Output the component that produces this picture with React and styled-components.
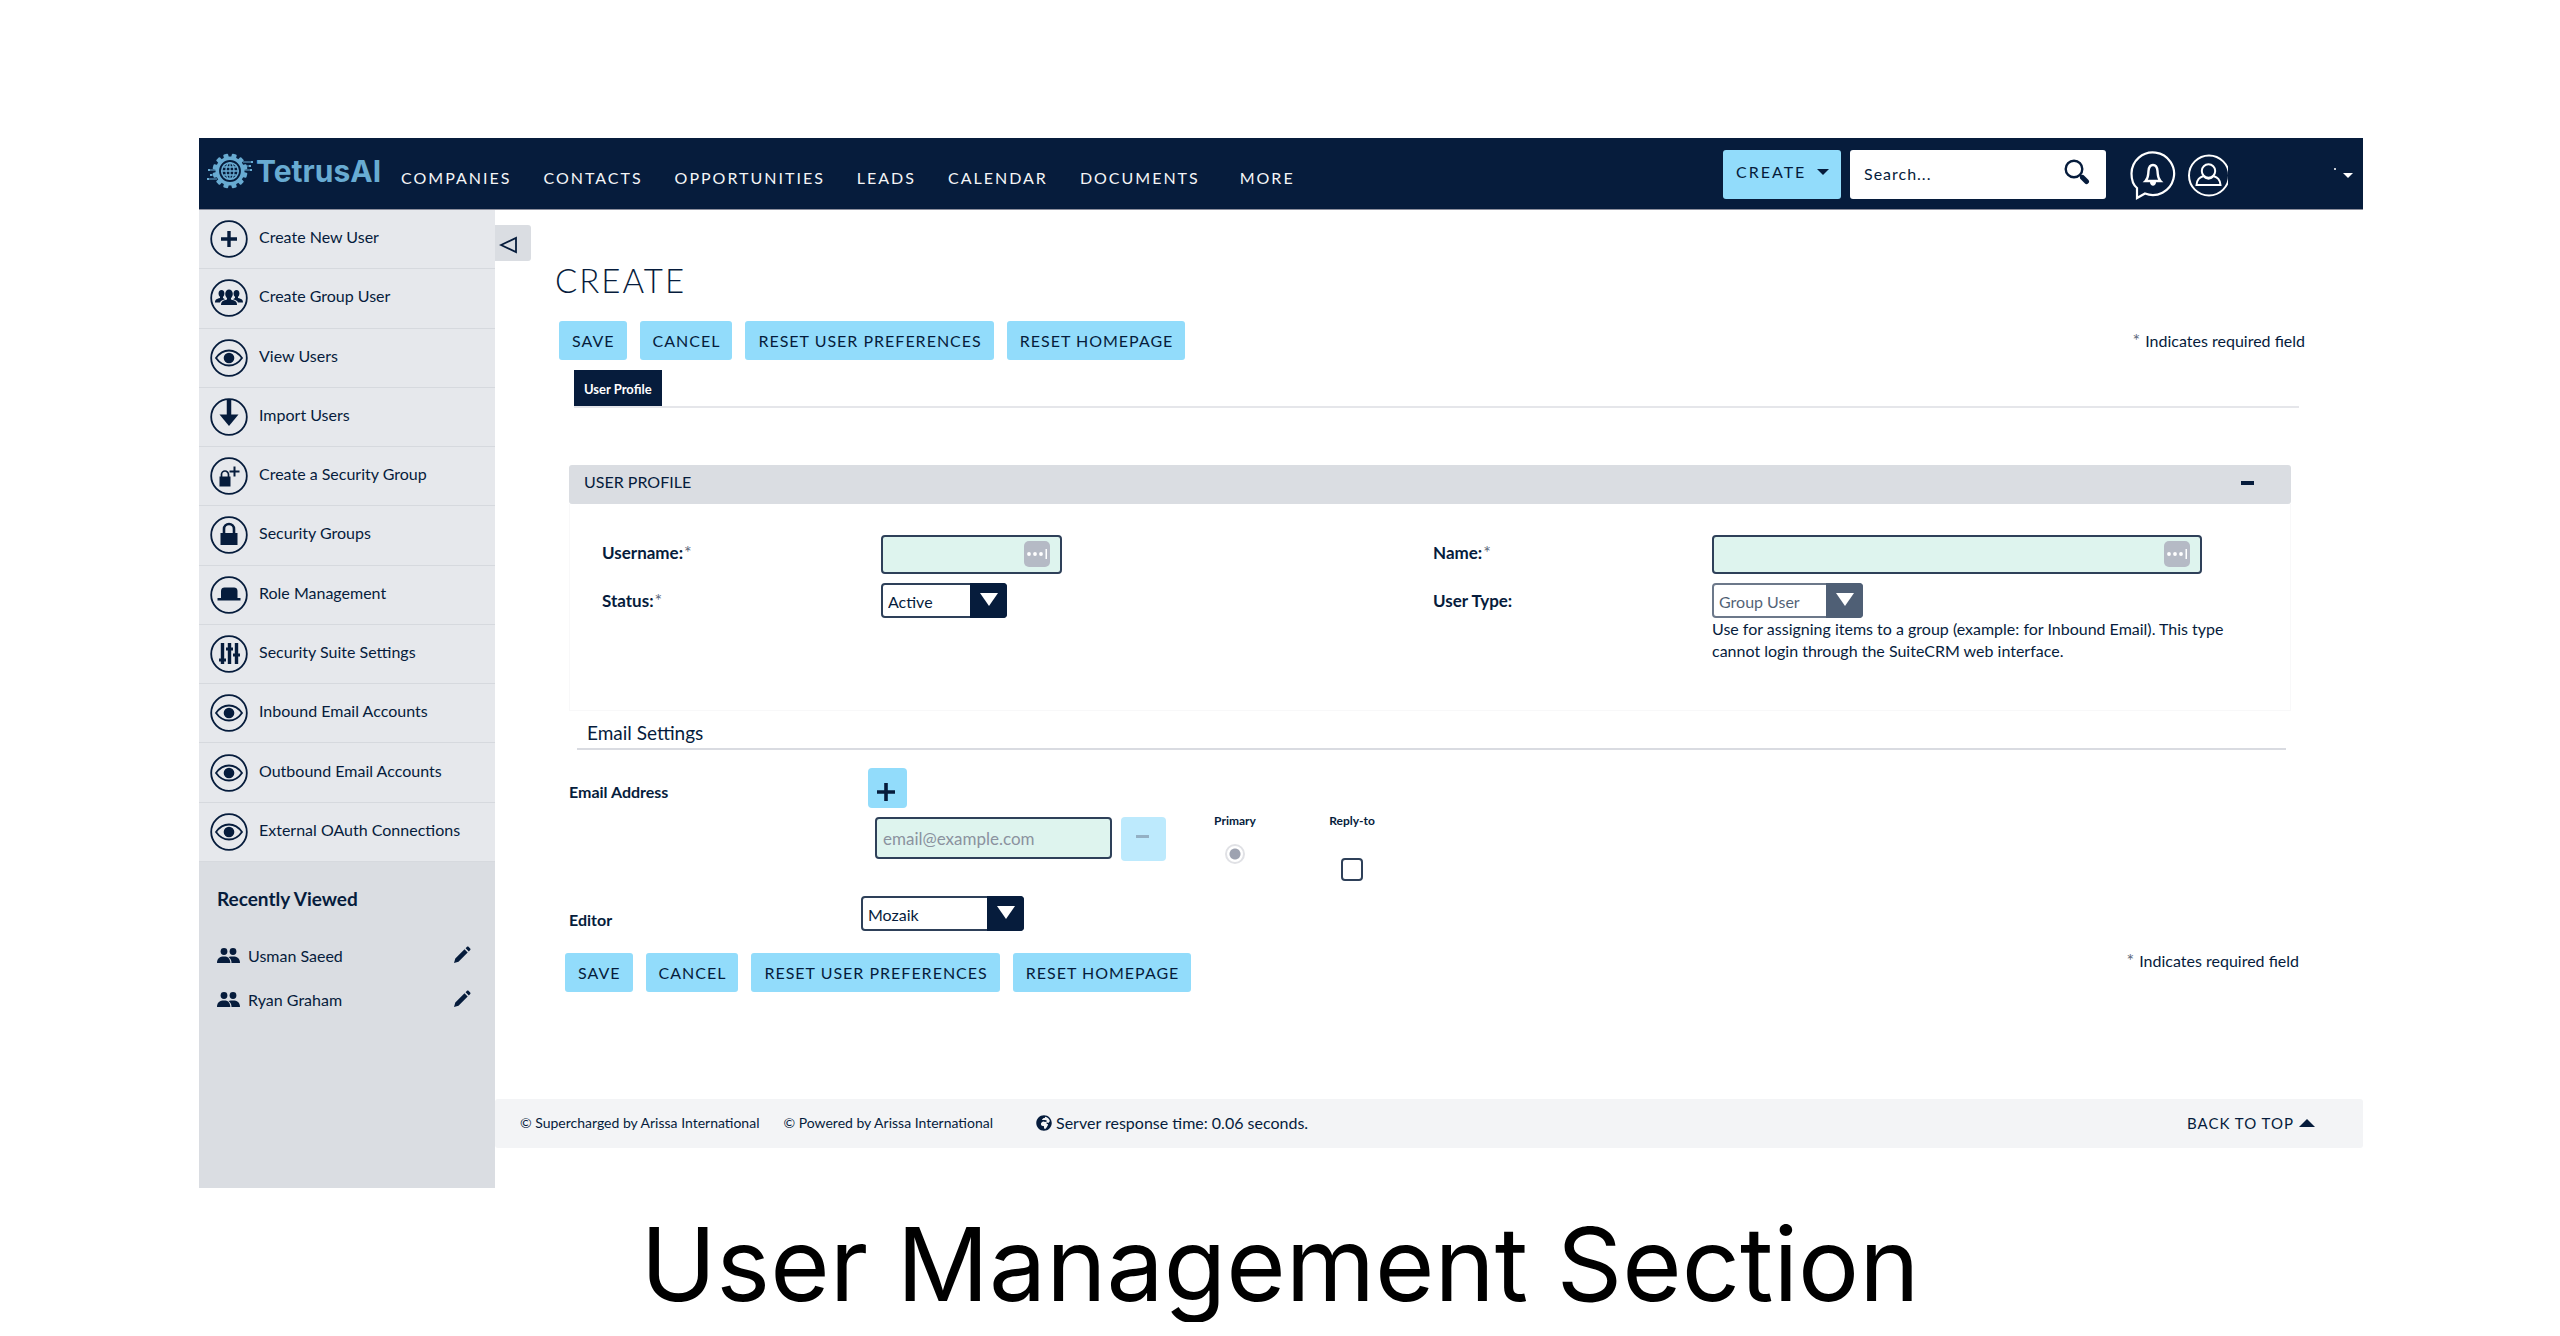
import React, { useState } from "react";
import styled, { createGlobalStyle } from "styled-components";
import { FaGlobeAfrica } from "react-icons/fa";

const GlobalStyle = createGlobalStyle`
  * {
    box-sizing: border-box;
  }
  body {
    margin: 0;
    background: #fff;
    color: #061c3c;
    font-family: Lato, "Liberation Sans", sans-serif;
    font-size: 16px;
  }
  button, input, select {
    font-family: inherit;
    margin: 0;
  }
`;

const Page = styled.div`
  padding: 138px 197px 0 199px;
`;

const Header = styled.header`
  display: flex;
  align-items: flex-start;
  height: 72px;
  padding-left: 8px;
  padding-right: 10px;
  background: #061c3c;
  border-bottom: 1px solid #8d8f9d;
`;

const Logo = styled.a`
  display: flex;
  align-items: center;
  gap: 3px;
  margin-top: 15px;
  color: #68abd2;
  font-family: Inter, "Liberation Sans", sans-serif;
  font-size: 30px;
  line-height: 36px;
  font-weight: 700;
  text-decoration: none;
`;

const Nav = styled.nav`
  display: flex;
  flex: 1;
  gap: 32px;
  margin-top: 30px;
  margin-left: 20px;
`;

const NavLink = styled.a`
  color: #f4f5f7;
  font-size: 16px;
  line-height: 20px;
  letter-spacing: 2px;
  text-decoration: none;

  &:last-child {
    margin-left: 8px;
  }
`;

const CreateButton = styled.button`
  display: flex;
  align-items: center;
  justify-content: space-between;
  width: 118px;
  height: 49px;
  margin-top: 12px;
  padding: 0 12px 6px 13px;
  border: 0;
  border-radius: 3px;
  background: #92dcfb;
  color: #061c3c;
  font-size: 16px;
  letter-spacing: 2px;
`;

const Caret = styled.span`
  border: ${(props) => props.$size}px solid transparent;
  border-bottom: 0;
  border-top-color: currentColor;
`;

const Search = styled.form`
  display: flex;
  align-items: center;
  width: 256px;
  height: 49px;
  margin: 12px 0 0 9px;
  padding: 0 16px 6px 14px;
  border-radius: 3px;
  background: #fff;
`;

const SearchInput = styled.input`
  flex: 1;
  min-width: 0;
  padding: 4px 0 0;
  border: 0;
  outline: 0;
  background: transparent;
  color: #061c3c;
  font-size: 16px;
  letter-spacing: 1px;

  &::placeholder {
    color: #061c3c;
    opacity: 1;
  }
`;

const IconButton = styled.button`
  display: flex;
  padding: 0;
  border: 0;
  background: none;
  color: inherit;
`;

const HeaderIcons = styled.div`
  display: flex;
  gap: 12px;
  margin: 12px 0 0 24px;
`;

const AccountMenu = styled.button`
  display: flex;
  align-items: flex-start;
  gap: 7px;
  margin: 30px 0 0 106px;
  padding: 0;
  border: 0;
  background: none;
  color: #fff;

  i {
    width: 2px;
    height: 2px;
    background: #c5cad3;
  }
  span {
    margin-top: 5px;
  }
`;

const Body = styled.div`
  display: flex;
  align-items: stretch;
`;

const Sidebar = styled.aside`
  width: 296px;
  flex-shrink: 0;
  background: #dadde2;
`;

const Actions = styled.ul`
  display: grid;
  grid-auto-rows: 1fr;
  min-height: 652px;
  margin: 0;
  padding: 0;
  list-style: none;
  background: #e6e8ec;
`;

const ActionItem = styled.li`
  border-bottom: 1px solid #d6d9de;

  a {
    display: flex;
    align-items: center;
    gap: 11px;
    height: 100%;
    padding-left: 11px;
    color: #061c3c;
    line-height: 20px;
    text-decoration: none;
  }
  span {
    padding-bottom: 4px;
  }
`;

const Recent = styled.section`
  padding: 26px 24px 0 18px;
`;

const RecentTitle = styled.h2`
  margin: 0 0 35px;
  font-size: 19px;
  line-height: 22px;
  font-weight: 700;
`;

const RecentItem = styled.div`
  display: flex;
  align-items: center;
  height: 20px;
  margin-bottom: 24px;

  a {
    flex: 1;
    margin-left: 8px;
    color: #061c3c;
    text-decoration: none;
  }
`;

const Main = styled.main`
  flex: 1;
  min-width: 0;
`;

const Toggle = styled.button`
  display: flex;
  align-items: center;
  width: 36px;
  height: 36px;
  margin-top: 15px;
  padding: 4px 0 0 4px;
  border: 0;
  border-radius: 0 3px 3px 0;
  background: #dadde2;
`;

const Content = styled.form`
  padding: 0 72px 107px 74px;
`;

const Title = styled.h1`
  margin: 0 -14px 22px;
  font-size: 33px;
  line-height: 38px;
  font-weight: 300;
  letter-spacing: 2px;
`;

const ButtonBar = styled.div`
  display: flex;
  align-items: ${(props) => (props.$bottom ? "flex-start" : "center")};
  gap: 13px;
  margin: ${(props) => (props.$bottom ? "22px -8px 0 -4px" : "0 -14px 10px -10px")};
`;

const Button = styled.button`
  height: 39px;
  padding: 0 12px 0 13px;
  border: 0;
  border-radius: 3px;
  background: #92dcfb;
  color: #061c3c;
  font-size: 16px;
  letter-spacing: 1px;
`;

const Required = styled.p`
  margin: 0 0 0 auto;
  line-height: 14px;
`;

const Star = styled.span`
  margin: 0 ${(props) => (props.$note ? 5 : 2)}px 0 1px;
  color: #60697c;
  font-size: 18px;
  line-height: 14px;
  font-weight: 400;
`;

const Tabs = styled.div`
  display: flex;
  margin: 0 -8px 57px 5px;
  border-bottom: 2px solid #e5e6ea;
`;

const Tab = styled.button`
  height: 36px;
  padding: 2px 10px 0;
  border: 0;
  background: #061c3c;
  color: #fff;
  font-size: 13px;
  font-weight: 700;
`;

const PanelHead = styled.div`
  display: flex;
  align-items: center;
  justify-content: space-between;
  height: 39px;
  padding: 0 37px 3px 15px;
  border-radius: 3px;
  background: #dadde2;

  h2 {
    margin: 0;
    padding-bottom: 3px;
    font-size: 16px;
    line-height: 20px;
    font-weight: 400;
  }
`;

const Minus = styled.span`
  width: 13px;
  height: ${(props) => (props.$muted ? 3 : 4)}px;
  background: ${(props) => (props.$muted ? "#93b0c4" : "#061c3c")};
`;

const PanelBody = styled.div`
  display: grid;
  grid-template-columns: 279px 1fr 279px 1fr;
  row-gap: 9px;
  min-height: 207px;
  padding: 31px 26px 40px 32px;
  border: 1px solid #f8f8f9;
  border-top: 0;
  align-content: start;
`;

const Label = styled.label`
  padding-top: ${(props) => props.$top}px;
  font-size: ${(props) => (props.$large ? 17 : 16)}px;
  line-height: 20px;
  font-weight: 700;
`;

const TextBox = styled.div`
  position: relative;
  width: ${(props) => props.$width}px;
  max-width: 100%;
  height: ${(props) => props.$height}px;

  input {
    width: 100%;
    height: 100%;
    padding: 0 6px;
    border: 2px solid #2e4059;
    border-radius: 4px;
    outline: 0;
    background: #def4ee;
    color: #061c3c;
    font-size: 17px;
  }
  input::placeholder {
    color: #8b929f;
    opacity: 1;
  }
  svg {
    position: absolute;
    top: 6px;
    right: 12px;
  }
`;

const SelectBox = styled.div`
  position: relative;
  width: ${(props) => props.$width}px;
  height: 35px;
  opacity: ${(props) => (props.$muted ? 0.7 : 1)};

  select {
    appearance: none;
    width: 100%;
    height: 100%;
    padding: 2px 40px 0 5px;
    border: 2px solid #2e4059;
    border-radius: 4px;
    background: #fff;
    color: #061c3c;
    font-size: 16px;
    opacity: 1;
  }
`;

const SelectArrow = styled.span`
  position: absolute;
  top: 0;
  right: 0;
  display: flex;
  align-items: center;
  justify-content: center;
  width: 37px;
  height: 100%;
  padding-bottom: 2px;
  border-radius: 0 4px 4px 0;
  background: #061c3c;
  color: #fff;
  pointer-events: none;

  i {
    border: 9px solid transparent;
    border-top: 13px solid currentColor;
    border-bottom: 0;
  }
`;

const Help = styled.p`
  max-width: 520px;
  margin: 0;
  font-size: 16px;
  line-height: 22px;
`;

const SectionTitle = styled.h2`
  margin: 0 5px 18px 8px;
  padding: 8px 0 1px 10px;
  border-bottom: 2px solid #d9dbe1;
  font-size: 19px;
  line-height: 28px;
  font-weight: 400;
`;

const SettingRow = styled.div`
  display: grid;
  grid-template-columns: 292px 1fr;
  margin-bottom: 14px;
`;

const AddButton = styled.button`
  display: flex;
  justify-content: center;
  width: 39px;
  height: 40px;
  margin: 0 0 9px 7px;
  padding: 15px 3px 0 0;
  border: 0;
  border-radius: 4px;
  background: #92dcfb;
`;

const EmailRow = styled.div`
  display: flex;
  align-items: flex-start;
  padding-left: 14px;
`;

const RemoveButton = styled.button`
  display: flex;
  align-items: center;
  justify-content: center;
  width: 45px;
  height: 44px;
  margin: 0 34px 0 9px;
  padding: 0 2px 5px 0;
  border: 0;
  border-radius: 4px;
  background: #bdeafd;
`;

const Option = styled.label`
  display: flex;
  flex-direction: column;
  align-items: center;
  width: 70px;
  height: 65px;
  margin-right: 47px;
  font-size: 12px;
  line-height: 8px;
  font-weight: 700;

  input {
    appearance: none;
    margin-top: ${(props) => (props.$check ? 33 : 19)}px;
  }
  input[type="checkbox"] {
    width: 22px;
    height: 23px;
    border: 2px solid #2e4059;
    border-radius: 4px;
  }
  input[type="radio"] {
    width: 20px;
    height: 20px;
    border: 2px solid #e0e1e5;
    border-radius: 50%;
    background: radial-gradient(circle, #9da2b0 0 5px, #fff 6px);
  }
`;

const Footer = styled.footer`
  display: flex;
  align-items: center;
  height: 49px;
  margin-bottom: 40px;
  padding: 0 48px 2px 25px;
  border-radius: 3px;
  background: #f3f4f6;
  font-size: 16px;

  svg {
    margin: 0 4px 0 19px;
  }
`;

const Copyright = styled.span`
  margin-right: 24px;
  font-size: 14px;
`;

const BackToTop = styled.a`
  display: flex;
  align-items: center;
  gap: 5px;
  margin-left: auto;
  color: #061c3c;
  font-size: 15px;
  letter-spacing: 1px;
  text-decoration: none;

  i {
    border: 8px solid transparent;
    border-top: 0;
    border-bottom-color: currentColor;
  }
`;

const Caption = styled.h2`
  margin: 18px 0 0;
  color: #000;
  font-family: Inter, "Open Sans", sans-serif;
  font-size: 102px;
  line-height: 116px;
  font-weight: 400;
  text-align: center;
`;

function GearLogo() {
  const teeth = Array.from({ length: 12 }, (_, i) => i * 30 + 15);
  return (
    <svg width="46" height="36" viewBox="0 0 46 36" fill="none" stroke="currentColor">
      {teeth.map((deg) => (
        <rect key={deg} x="20.5" y="0.5" width="5" height="6" rx="1" fill="currentColor" stroke="none" transform={`rotate(${deg} 23 18)`} />
      ))}
      <circle cx="23" cy="18" r="12.7" strokeWidth="3.6" />
      <circle cx="23" cy="18" r="8.3" strokeWidth="1.6" />
      <ellipse cx="23" cy="18" rx="4" ry="8.3" strokeWidth="1.3" />
      <path d="M23 10v16M15 18h16M16.500 14h13M16.500 22h13" strokeWidth="1.3" />
      <path d="M2 17h7M5 22h6M1 26h9M36 9h9M37 13h6M37 17h8" strokeWidth="1" />
      <path d="M1 17h2M3 22h2M0 26h2M44 9h2M42 13h2M43 17h2" strokeWidth="2" />
    </svg>
  );
}

const glyphs = {
  plus: <path d="M19 11v16M11 19h16" strokeWidth="3.4" />,
  group: (
    <g fill="currentColor" stroke="none">
      <ellipse cx="19" cy="15" rx="3.8" ry="4.6" />
      <path d="M17 18h4v2.500c4 1 6 2 6 5.500H11c0-3.500 2-4.500 6-5.500z" />
      <ellipse cx="11.500" cy="14.500" rx="2.900" ry="3.500" />
      <path d="M10 17h3v2l2 1.200c-3.500 1.300-4.500 1.800-5 3.300H5c0-3 1.500-3.500 5-4.500z" />
      <ellipse cx="26.500" cy="14.500" rx="2.900" ry="3.500" />
      <path d="M28 17h-3v2l-2 1.200c3.500 1.300 4.500 1.800 5 3.300h5c0-3-1.500-3.500-5-4.500z" />
    </g>
  ),
  eye: (
    <>
      <path d="M6 19c7-10 19-10 26 0-7 10-19 10-26 0z" strokeWidth="1.800" />
      <circle cx="19" cy="19" r="5.300" fill="currentColor" stroke="none" />
    </>
  ),
  down: (
    <>
      <path d="M19 1v18" strokeWidth="4.500" />
      <path d="M9.500 16.500h19L19 28z" fill="currentColor" stroke="none" />
    </>
  ),
  lockPlus: (
    <>
      <rect x="9.500" y="19.500" width="11" height="10" fill="currentColor" stroke="none" />
      <path d="M11.500 20v-2.500a3.500 3.500 0 0 1 7 0V20" strokeWidth="1.700" />
      <path d="M24.500 9.500v10M19.500 14.500h10" strokeWidth="2" />
    </>
  ),
  lock: (
    <>
      <rect x="10.500" y="17" width="17" height="12" fill="currentColor" stroke="none" />
      <path d="M14 18v-5a5 5 0 0 1 10 0v5" strokeWidth="2.600" />
    </>
  ),
  hat: <path d="M11 22v-7c0-2.500 1.500-3.500 3.500-3.500h9.500c2 0 3.500 1 3.500 3.500v7h3v2.500h-23V22z" fill="currentColor" stroke="none" />,
  sliders: (
    <>
      <path d="M12.500 8v21M19.500 8v21M26.500 8v21" strokeWidth="3.400" />
      <path d="M9 25h7M16 14h7M23 20h7" strokeWidth="3" />
    </>
  ),
};

function ActionIcon({ name }) {
  return (
    <svg width="38" height="38" viewBox="0 0 38 38" fill="none" stroke="currentColor">
      <circle cx="19" cy="19" r="17.800" strokeWidth="1.800" />
      {glyphs[name]}
    </svg>
  );
}

function PeopleIcon() {
  return (
    <svg width="23" height="20" viewBox="0 0 23 20" fill="#061c3c">
      <circle cx="7" cy="6.500" r="3.400" />
      <circle cx="16" cy="6.500" r="3.400" />
      <path d="M0 18c0-5 3-6.500 7-6.500s6 1.800 6.300 6.500z" />
      <path d="M11.500 12c1.400-.4 3-.5 4.500-.5 4 0 7 1.500 7 6.500h-8.500c0-2.800-1-4.600-3-6z" />
    </svg>
  );
}

function PencilIcon() {
  return (
    <svg width="18" height="18" viewBox="0 0 18 18" fill="#061c3c">
      <path d="M1 17l1.300-4.500 9.200-9.200 3.200 3.200-9.200 9.200zM12.600 2.200L14 .800c.500-.500 1-.500 1.500 0l1.700 1.700c.500.500.500 1 0 1.500l-1.400 1.400z" />
    </svg>
  );
}

function FillIcon() {
  return (
    <svg width="26" height="26" viewBox="0 0 26 26">
      <rect width="26" height="26" rx="5" fill="#b5bac5" />
      <g fill="#fff">
        <circle cx="5" cy="13" r="1.900" />
        <circle cx="11" cy="13" r="1.900" />
        <circle cx="17" cy="13" r="1.900" />
        <rect x="21.500" y="8" width="1.500" height="10" />
      </g>
    </svg>
  );
}

function Select({ id, width, muted, options }) {
  return (
    <SelectBox $width={width} $muted={muted}>
      <select id={id} disabled={muted}>
        {options.map((o) => (
          <option key={o}>{o}</option>
        ))}
      </select>
      <SelectArrow>
        <i />
      </SelectArrow>
    </SelectBox>
  );
}

function FormButtons({ bottom }) {
  return (
    <ButtonBar $bottom={bottom}>
      <Button type="button">SAVE</Button>
      <Button type="button">CANCEL</Button>
      <Button type="button">RESET USER PREFERENCES</Button>
      <Button type="button">RESET HOMEPAGE</Button>
      <Required>
        <Star $note>*</Star>
        Indicates required field
      </Required>
    </ButtonBar>
  );
}

const navItems = ["COMPANIES", "CONTACTS", "OPPORTUNITIES", "LEADS", "CALENDAR", "DOCUMENTS", "MORE"];

const actions = [
  ["plus", "Create New User"],
  ["group", "Create Group User"],
  ["eye", "View Users"],
  ["down", "Import Users"],
  ["lockPlus", "Create a Security Group"],
  ["lock", "Security Groups"],
  ["hat", "Role Management"],
  ["sliders", "Security Suite Settings"],
  ["eye", "Inbound Email Accounts"],
  ["eye", "Outbound Email Accounts"],
  ["eye", "External OAuth Connections"],
];

const recent = ["Usman Saeed", "Ryan Graham"];

export default function App() {
  const [replyTo, setReplyTo] = useState(false);

  return (
    <>
      <GlobalStyle />
      <Page>
        <Header>
          <Logo href="#">
            <GearLogo />
            TetrusAI
          </Logo>
          <Nav>
            {navItems.map((item) => (
              <NavLink key={item} href="#">
                {item}
              </NavLink>
            ))}
          </Nav>
          <CreateButton type="button">
            CREATE
            <Caret $size={6} />
          </CreateButton>
          <Search>
            <SearchInput placeholder="Search..." aria-label="Search" />
            <IconButton type="button" aria-label="Search">
              <svg width="26" height="26" viewBox="0 0 26 26" fill="none" stroke="currentColor">
                <circle cx="10" cy="10" r="8.300" strokeWidth="2.400" />
                <path d="M18.500 18.500l4 4" strokeWidth="5" strokeLinecap="round" />
                <path d="M15.500 15.500l3 3" strokeWidth="2" />
              </svg>
            </IconButton>
          </Search>
          <HeaderIcons>
            <IconButton type="button" aria-label="Notifications">
              <svg width="46" height="50" viewBox="0 0 46 50" fill="none" stroke="#fff" strokeWidth="2.200">
                <path d="M7 48V38C2 34 1.500 27 1.500 23.500a21.300 21.300 0 1 1 13.500 20z" />
                <path d="M15.500 31c3-3 2.500-5 3-10 .3-4 1.500-6 4.500-6s4.200 2 4.500 6c.5 5 0 7 3 10z" strokeWidth="2.400" />
                <path d="M20 32h6c0 5-6 5-6 0z" fill="#fff" stroke="none" />
              </svg>
            </IconButton>
            <IconButton type="button" aria-label="Profile">
              <svg width="40" height="50" viewBox="0 0 40 50" fill="none" stroke="#fff" strokeWidth="2">
                <circle cx="21" cy="25.500" r="20" />
                <circle cx="20.500" cy="21" r="6.700" />
                <path d="M15.500 26c-4 1.500-6.500 3-7 9h24c-.5-6-3-7.500-7-9-2.500 3.500-7.500 3.500-10 0z" />
              </svg>
            </IconButton>
          </HeaderIcons>
          <AccountMenu type="button" aria-label="Account menu">
            <i />
            <Caret $size={5} />
          </AccountMenu>
        </Header>

        <Body>
          <Sidebar>
            <Actions>
              {actions.map(([icon, text]) => (
                <ActionItem key={text}>
                  <a href="#">
                    <ActionIcon name={icon} />
                    <span>{text}</span>
                  </a>
                </ActionItem>
              ))}
            </Actions>
            <Recent>
              <RecentTitle>Recently Viewed</RecentTitle>
              {recent.map((name) => (
                <RecentItem key={name}>
                  <PeopleIcon />
                  <a href="#">{name}</a>
                  <IconButton type="button" aria-label={`Edit ${name}`}>
                    <PencilIcon />
                  </IconButton>
                </RecentItem>
              ))}
            </Recent>
          </Sidebar>

          <Main>
            <Toggle type="button" aria-label="Collapse sidebar">
              <svg width="20" height="18" viewBox="0 0 20 18" fill="none" stroke="#061c3c" strokeWidth="1.800">
                <path d="M2 9l15-7v14z" />
              </svg>
            </Toggle>
            <Content>
              <Title>CREATE</Title>
              <FormButtons />
              <Tabs>
                <Tab type="button">User Profile</Tab>
              </Tabs>

              <PanelHead>
                <h2>USER PROFILE</h2>
                <IconButton type="button" aria-label="Collapse panel">
                  <Minus />
                </IconButton>
              </PanelHead>
              <PanelBody>
                <Label htmlFor="username" $top={8} $large>
                  Username:<Star>*</Star>
                </Label>
                <TextBox $width={181} $height={39}>
                  <input id="username" type="text" />
                  <FillIcon />
                </TextBox>
                <Label htmlFor="name" $top={8} $large>
                  Name:<Star>*</Star>
                </Label>
                <TextBox $width={490} $height={39}>
                  <input id="name" type="text" />
                  <FillIcon />
                </TextBox>
                <Label htmlFor="status" $top={8} $large>
                  Status:<Star>*</Star>
                </Label>
                <Select id="status" width={126} options={["Active", "Inactive"]} />
                <Label htmlFor="user-type" $top={8} $large>
                  User Type:
                </Label>
                <div>
                  <Select id="user-type" width={151} muted options={["Group User"]} />
                  <Help>
                    Use for assigning items to a group (example: for Inbound Email). This type cannot login
                    through the SuiteCRM web interface.
                  </Help>
                </div>
              </PanelBody>

              <SectionTitle>Email Settings</SectionTitle>
              <SettingRow>
                <Label htmlFor="email" $top={14}>
                  Email Address
                </Label>
                <div>
                  <AddButton type="button" aria-label="Add email address">
                    <svg width="18" height="18" viewBox="0 0 18 18" stroke="#061c3c" strokeWidth="3.600">
                      <path d="M9 0v18M0 9h18" />
                    </svg>
                  </AddButton>
                  <EmailRow>
                    <TextBox $width={237} $height={42}>
                      <input id="email" type="email" placeholder="email@example.com" />
                    </TextBox>
                    <RemoveButton type="button" aria-label="Remove email address">
                      <Minus $muted />
                    </RemoveButton>
                    <Option>
                      Primary
                      <input type="radio" name="primary" defaultChecked />
                    </Option>
                    <Option $check>
                      Reply-to
                      <input type="checkbox" checked={replyTo} onChange={(e) => setReplyTo(e.target.checked)} />
                    </Option>
                  </EmailRow>
                </div>
              </SettingRow>
              <SettingRow>
                <Label htmlFor="editor" $top={14}>
                  Editor
                </Label>
                <Select id="editor" width={163} options={["Mozaik", "TinyMCE"]} />
              </SettingRow>
              <FormButtons bottom />
            </Content>

            <Footer>
              <Copyright>© Supercharged by Arissa International</Copyright>
              <Copyright>© Powered by Arissa International</Copyright>
              <FaGlobeAfrica size={16} />
              Server response time: 0.06 seconds.
              <BackToTop href="#">
                BACK TO TOP
                <i />
              </BackToTop>
            </Footer>
          </Main>
        </Body>
      </Page>
      <Caption>User Management Section</Caption>
    </>
  );
}
